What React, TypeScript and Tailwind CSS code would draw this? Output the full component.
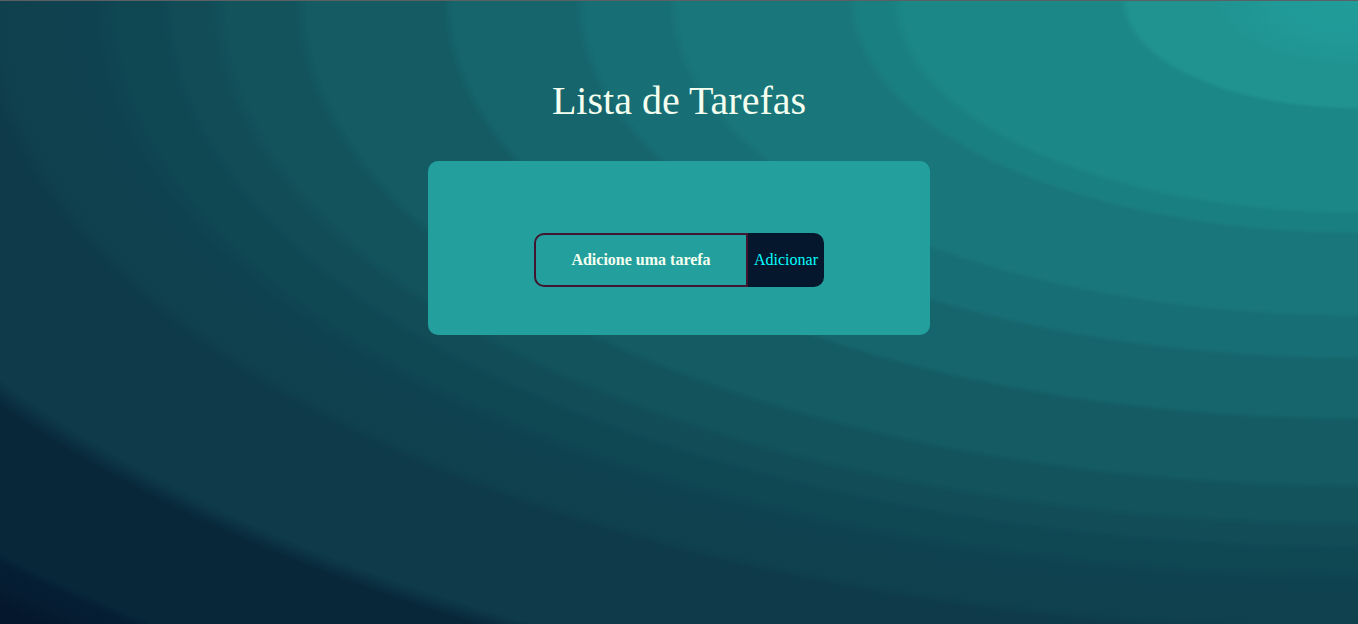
import { useState } from "react";
import type { FormEvent } from "react";

const backdrop =
  "bg-[radial-gradient(ellipse_farthest-corner_at_top_right,#209c99_0%,#209a98_4%,#209391_7.5%,#209391_11.9%,#1b8786_12.4%,#1b8786_23.7%,#1a7f80_24.3%,#1a7f80_26%,#19767a_26.6%,#19767a_35.4%,#176e74_36%,#176e74_40.2%,#16656c_40.8%,#16656c_47.1%,#145b63_47.7%,#145b63_54.7%,#12535c_55.4%,#12535c_58.9%,#114c57_59.8%,#114c57_61.6%,#0f4753_62.4%,#0f4753_64.6%,#0f4250_65.8%,#0f404e_70.9%,#0e3a49_71.9%,#0e3a49_82.7%,#08283a_84.3%,#08283a_94.4%,#051e34_95.2%,#051c31_97%,#04172d_98.5%)]";

export default function App() {
  const [task, setTask] = useState("");
  const [tasks, setTasks] = useState<string[]>([]);

  function addTask(event: FormEvent) {
    event.preventDefault();
    const name = task.trim();
    if (!name) return;
    setTasks([...tasks, name]);
    setTask("");
  }

  return (
    <div
      className={`flex min-h-screen flex-col items-center border-t border-[#5b6064] px-4 font-['Liberation_Serif',serif] text-base ${backdrop}`}
    >
      <h1 className="pt-19 text-[40px] leading-12 text-[#f5fff0]">Lista de Tarefas</h1>
      <main className="mt-9 w-full max-w-[502px] rounded-[10px] bg-[#23a09d] px-4 pt-18 pb-12">
        <form onSubmit={addTask} className="flex h-[54px] justify-center">
          <input
            type="text"
            aria-label="Adicione uma tarefa"
            placeholder="Adicione uma tarefa"
            value={task}
            onChange={(event) => setTask(event.target.value)}
            className="w-[214px] min-w-0 rounded-l-[10px] border-2 border-[#43142f] bg-transparent text-center font-bold text-[#f5fff0] outline-none placeholder:text-[#f5fff0]"
          />
          <button
            type="submit"
            className="w-[76px] cursor-pointer rounded-r-[10px] bg-[#05172d] text-[#00ffff]"
          >
            Adicionar
          </button>
        </form>
        {tasks.length > 0 && (
          <ul className="mt-6 space-y-2 text-center text-[#f5fff0]">
            {tasks.map((name, index) => (
              <li key={index}>{name}</li>
            ))}
          </ul>
        )}
      </main>
    </div>
  );
}
